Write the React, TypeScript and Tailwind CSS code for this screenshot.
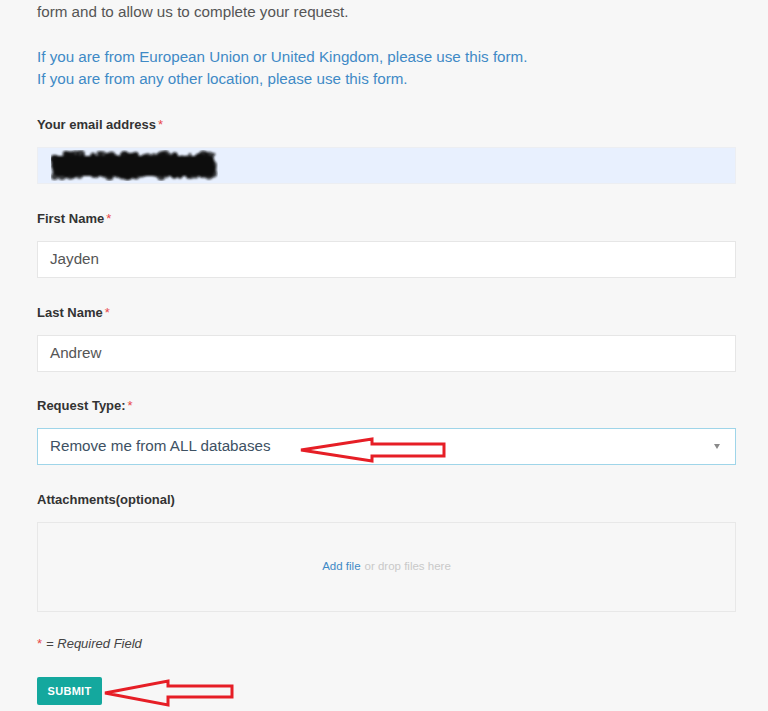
import React from 'react';

const font = { fontFamily: '"Liberation Sans", Arial, sans-serif' };

function Label({ text, required }: { text: string; required?: boolean }) {
  return (
    <div className="h-5 mb-3 text-[13px] leading-5 font-bold text-[#333]">
      {text}
      {required && <span className="ml-[2px] text-[#e8474a] font-normal align-top text-[13px]">*</span>}
    </div>
  );
}

function TextField({ value, last }: { value: string; last?: boolean }) {
  return (
    <div
      className={
        'h-[37px] bg-white border border-[#e6e6e6] flex items-center pl-[12px] text-[15.2px] text-[#555] ' +
        (last ? 'mb-[24px]' : 'mb-[25px]')
      }
    >
      {value}
    </div>
  );
}

// redacted email: a smeared marker scribble
function Scribble() {
  const dots: { x: number; y: number; r: number }[] = [];
  let seed = 7;
  const rnd = () => {
    seed = (seed * 9301 + 49297) % 233280;
    return seed / 233280;
  };
  for (let i = 0; i < 320; i++) {
    dots.push({ x: 3 + rnd() * 160, y: 4 + rnd() * 23, r: 1.5 + rnd() * 3.2 });
  }
  return (
    <svg width={167} height={31} viewBox="0 0 167 31">
      <defs>
        <filter id="smear">
          <feGaussianBlur stdDeviation="0.8" />
        </filter>
      </defs>
      <g filter="url(#smear)" fill="#0b0b0b">
        <rect x={3} y={6} width={160} height={20} rx={4} />
        {dots.map((d, i) => (
          <circle key={i} cx={d.x} cy={d.y} r={d.r} opacity={0.8} />
        ))}
      </g>
    </svg>
  );
}

// hand-drawn red callout arrows laid over the form
function Arrows() {
  return (
    <svg
      className="absolute inset-0 pointer-events-none"
      width={768}
      height={711}
      viewBox="0 0 768 711"
    >
      <polygon
        points="301,450 372,439 372,444 444,444 444,456 372,456 372,461"
        fill="none"
        stroke="#e61e26"
        strokeWidth={3}
      />
      <polygon
        points="105,693 168,681 168,686 232,686 232,697 168,697 168,705"
        fill="none"
        stroke="#e61e26"
        strokeWidth={3}
      />
    </svg>
  );
}

export default function App() {
  return (
    <div className="relative w-[768px] h-[711px] overflow-hidden bg-[#f7f7f7]" style={font}>
      <div className="pl-[37px] pr-[32px] pt-[1px]">
        <p className="text-[15.2px] leading-[22px] text-[#555]">form and to allow us to complete your request.</p>

        <div className="mt-[23px] text-[15.2px] leading-[22px] text-[#3f8ac6]">
          <p>If you are from European Union or United Kingdom, please use this form.</p>
          <p>If you are from any other location, please use this form.</p>
        </div>

        <div className="mt-[25px]">
          <Label text="Your email address" required />
          <div className="h-[37px] mb-[25px] bg-[#e8f0fe] border border-[#eceef2] flex items-center pl-[13px]">
            <Scribble />
          </div>

          <Label text="First Name" required />
          <TextField value="Jayden" />

          <Label text="Last Name" required />
          <TextField value="Andrew" last />

          <Label text="Request Type:" required />
          <div className="h-[37px] mb-[25px] bg-white border border-[#9fd5e9] flex items-center justify-between pl-[12px] pr-[15px]">
            <span className="text-[15.2px] text-[#3e5163]">Remove me from ALL databases</span>
            <span className="w-0 h-0 border-l-[3px] border-r-[3px] border-t-[5px] border-l-transparent border-r-transparent border-t-[#8a8a8a]" />
          </div>

          <Label text="Attachments(optional)" />
          <div className="h-[90px] border border-[#e8e8e8] flex items-center justify-center text-[11.5px]">
            <span className="text-[#3f8ac6]">Add file</span>
            <span className="ml-1 text-[#c9c9c9]">or drop files here</span>
          </div>

          <p className="mt-[22px] h-5 leading-5 text-[13px] italic text-[#444]">
            <span className="text-[#e8474a] not-italic mr-[4px]">*</span>= Required Field
          </p>

          <button className="mt-[23px] w-[65px] h-[28px] bg-[#14a89e] text-white text-[11px] font-bold tracking-[0.3px] rounded-[2px]">
            SUBMIT
          </button>
        </div>
      </div>
      <Arrows />
    </div>
  );
}
